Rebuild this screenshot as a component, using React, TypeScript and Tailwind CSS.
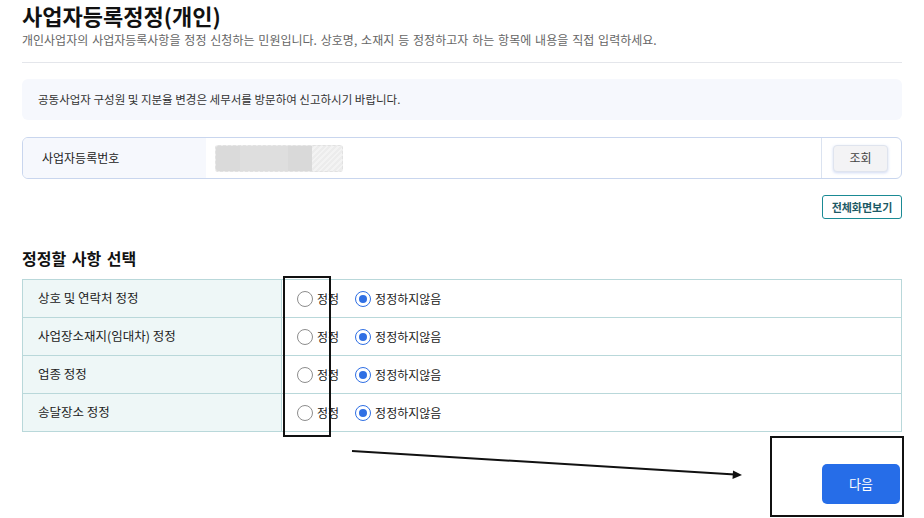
import React from "react";

function Radio({ checked }: { checked?: boolean }) {
  if (checked) {
    return (
      <span className="w-[16px] h-[16px] rounded-full border-[1.5px] border-[#2f6fe4] bg-white flex items-center justify-center shrink-0">
        <span className="w-[8px] h-[8px] rounded-full bg-[#2f6fe4]" />
      </span>
    );
  }
  return <span className="w-[16px] h-[16px] rounded-full border border-[#8d8d8d] bg-white shrink-0" />;
}

export default function App() {
  const rows = ["상호 및 연락처 정정", "사업장소재지(임대차) 정정", "업종 정정", "송달장소 정정"];
  return (
    <div className="relative w-[924px] h-[518px] overflow-hidden bg-white font-['Noto_Sans_CJK_KR','Noto_Sans',sans-serif] text-[#222]">
      <div className="px-[22px]">
        <h1 className="text-[22px] font-bold leading-[30px] text-[#111]">사업자등록정정(개인)</h1>
        <p className="text-[12px] leading-[20px] text-[#666] [word-spacing:1.2px]">
          개인사업자의 사업자등록사항을 정정 신청하는 민원입니다. 상호명, 소재지 등 정정하고자 하는 항목에 내용을 직접 입력하세요.
        </p>
        <div className="mt-[12px] h-px bg-[#e4e6eb]" />

        <div className="mt-[16px] h-[41px] rounded-[6px] bg-[#f6f8fd] flex items-center pl-[16px] text-[11.5px] text-[#333]">
          공동사업자 구성원 및 지분율 변경은 세무서를 방문하여 신고하시기 바랍니다.
        </div>

        <div className="mt-[17px] h-[42px] rounded-[6px] border border-[#c9d6ee] flex overflow-hidden">
          <div className="w-[183px] bg-[#f6f8fd] flex items-center pl-[19px] text-[12px] text-[#222]">사업자등록번호</div>
          <div className="flex-1 flex items-center pl-[9px]">
            <div className="relative w-[128px] h-[27px] rounded-[3px] border border-dashed border-[#e2e2e2] bg-[#eeeeee] flex overflow-hidden">
              <div className="w-[24px] bg-[#dadada]" />
              <div className="w-[48px] bg-[#dedede]" />
              <div className="w-[24px] bg-[#d9d9d9]" />
              <div className="flex-1 bg-[repeating-linear-gradient(135deg,#ececec_0px,#ececec_2px,#f3f3f3_2px,#f3f3f3_4px)]" />
            </div>
          </div>
          <div className="w-[80px] border-l border-[#dbe3f0] flex items-center pl-[11px]">
            <button className="w-[55px] h-[27px] rounded-[4px] border border-[#dfe4ee] bg-[#f3f3f5] shadow-[0_1px_3px_rgba(120,150,220,0.35)] text-[12px] text-[#444]">
              조회
            </button>
          </div>
        </div>

        <div className="mt-[16px] flex justify-end">
          <button className="w-[80px] h-[24px] rounded-[3px] border border-[#1a8a94] text-[11px] font-semibold text-[#1d5a66]">
            전체화면보기
          </button>
        </div>

        <h2 className="mt-[28px] text-[16px] font-bold leading-[22px] text-[#111] [word-spacing:2px]">정정할 사항 선택</h2>

        <div className="mt-[10px] border border-[#b9d8da]">
          {rows.map((r, i) => (
            <div key={r} className={`flex ${i < rows.length - 1 ? "border-b border-[#b9d8da] h-[38px]" : "h-[37px]"}`}>
              <div className="w-[259px] bg-[#eef7f7] border-r border-[#b9d8da] pl-[15px] flex items-center text-[12.5px] text-[#222]">
                {r}
              </div>
              <div className="flex-1 flex items-center pl-[15px] text-[12px] text-[#222]">
                <Radio />
                <span className="ml-[4px]">정정</span>
                <span className="ml-[16px]">
                  <Radio checked />
                </span>
                <span className="ml-[4px]">정정하지않음</span>
              </div>
            </div>
          ))}
        </div>

        <div className="mt-[32px] flex justify-end pr-[2px]">
          <button className="w-[78px] h-[40px] rounded-[5px] bg-[#266de8] text-white text-[13px]">다음</button>
        </div>
      </div>

      {/* annotations */}
      <div className="absolute left-[283px] top-[276px] w-[48px] h-[161px] border-2 border-[#111]" />
      <div className="absolute left-[770px] top-[436px] w-[134px] h-[81px] border-2 border-[#111]" />
      <svg className="absolute left-0 top-0" width="924" height="518" viewBox="0 0 924 518">
        <line x1="352" y1="451" x2="735" y2="474.6" stroke="#111" strokeWidth="2" />
        <polygon points="742,475 733,470.5 732.5,479" fill="#111" />
      </svg>
    </div>
  );
}
